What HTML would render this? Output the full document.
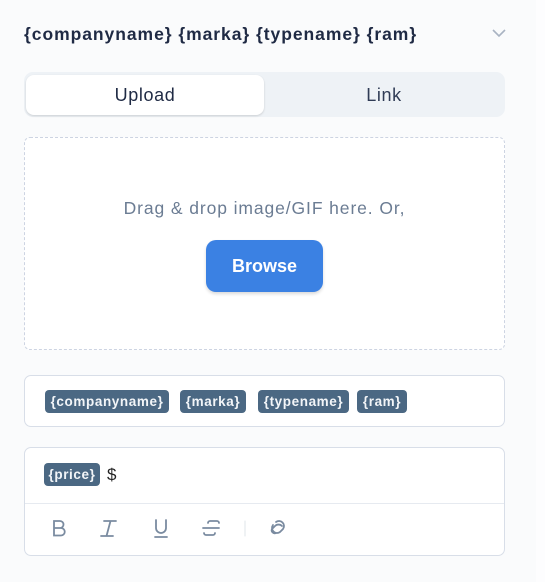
<!DOCTYPE html>
<html><head><style>
*{box-sizing:border-box;margin:0;padding:0}
body{width:545px;height:582px;background:#fafbfc;font-family:"Liberation Sans",sans-serif;position:relative;overflow:hidden}
.rcol{position:absolute;left:536px;top:0;width:9px;height:582px;background:#fdfdfe}
.title{position:absolute;left:24px;top:24px;font-size:17.5px;font-weight:bold;color:#1f2a44;letter-spacing:0.95px;white-space:nowrap}
.chev{position:absolute;left:491px;top:27px}
.tabs{position:absolute;left:24px;top:72px;width:481px;height:45px;background:#eef2f6;border-radius:9px}
.tab{position:absolute;top:3px;height:40px;line-height:40px;text-align:center;font-size:18px;color:#1f2a44;letter-spacing:0.6px}
.t1{left:2px;width:238px;background:#fff;border-radius:8px;box-shadow:0 1px 2px rgba(0,0,0,.15)}
.t2{left:240px;width:240px;color:#2f3b55}
.drop{position:absolute;left:24px;top:137px;width:481px;height:213px;background:#fff;border:1px dashed #cdd4e2;border-radius:6px}
.dt{position:absolute;left:0;width:100%;top:60px;text-align:center;font-size:17.5px;color:#6b7c93;letter-spacing:0.9px}
.btn{position:absolute;left:181px;top:102px;width:117px;height:52px;background:#3b81e3;border-radius:10px;color:#fff;font-weight:bold;font-size:18px;line-height:52px;text-align:center;box-shadow:0 2px 3px rgba(0,0,0,.15)}
.box{position:absolute;left:24px;width:481px;background:#fff;border:1px solid #d8dee8;border-radius:7px}
.tag{position:absolute;top:0;height:23px;line-height:23px;padding:0;text-align:center;background:#4b6883;color:#f2f5f8;font-weight:bold;font-size:13.5px;border-radius:4px;letter-spacing:0.6px;white-space:nowrap}
</style></head><body>
<div class="rcol"></div>
<div class="title">{companyname} {marka} {typename} {ram}</div>
<svg class="chev" width="16" height="12" viewBox="0 0 16 12"><path d="M2 3l6 6 6-6" fill="none" stroke="#a9b3c2" stroke-width="1.6"/></svg>
<div class="tabs"><div class="tab t1">Upload</div><div class="tab t2">Link</div></div>
<div class="drop"><div class="dt">Drag &amp; drop image/GIF here. Or,</div><div class="btn">Browse</div></div>
<div class="box" style="top:375px;height:52px">
 <div style="position:absolute;top:14px;left:0;width:100%">
  <span class="tag" style="left:20px;width:124px">{companyname}</span>
  <span class="tag" style="left:155px;width:66px">{marka}</span>
  <span class="tag" style="left:233px;width:91px">{typename}</span>
  <span class="tag" style="left:332px;width:50px">{ram}</span>
 </div>
</div>
<div class="box" style="top:447px;height:109px">
 <span class="tag" style="top:15px;left:19px;width:56px">{price}</span>
 <span style="position:absolute;left:82px;top:17px;font-size:17px;color:#222">$</span>
 <div style="position:absolute;left:0;top:55px;width:100%;border-top:1px solid #e6eaf0"></div>
</div>
<svg width="545" height="582" style="position:absolute;left:0;top:0" fill="none" stroke="#7a8ba0" stroke-width="1.8" stroke-linecap="round">
 <path d="M54 521h6a3.5 3.5 0 010 7h-6zM54 528h7a3.7 3.7 0 010 7.5h-7z"/>
 <path d="M104 521h12M101 536h12M110.5 521l-4 15"/>
 <path d="M156 520v8a5 5 0 0010 0v-8M155 537h12"/>
 <path d="M219 523a2 2 0 00-2-2h-7a2 2 0 00-2 2M203 528h16M204 533a2 2 0 002 2h7a2 2 0 002-2"/>
 <path d="M245 521v15" stroke="#dfe4ea" stroke-width="1"/>
 <path d="M276 522a5 5 0 017 7l-3 3a5 5 0 01-7-7M282 526a5 5 0 00-7 0l-3 3a3 3 0 004 4"/>
</svg>
</body></html>
